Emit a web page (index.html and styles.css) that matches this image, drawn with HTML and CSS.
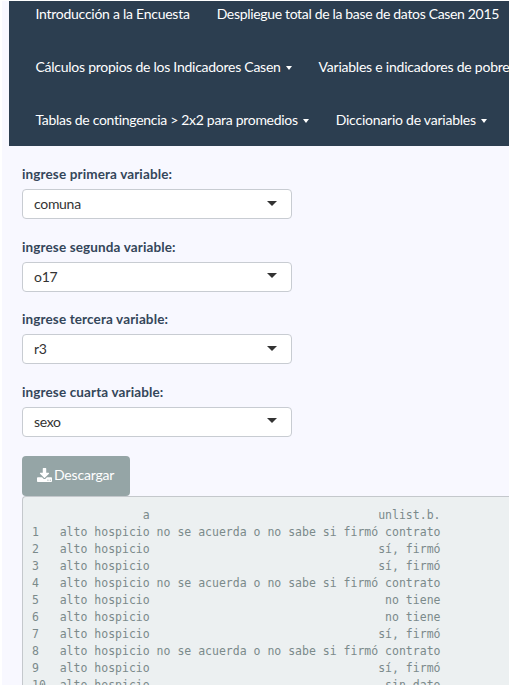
FILE: index.html
```html
<!DOCTYPE html>
<html lang="es">
<head>
<meta charset="utf-8">
<title>Casen 2015</title>
<link rel="stylesheet" href="styles.css">
</head>
<body>
<main class="page">
  <nav class="navbar">
    <div class="nav-row"><a class="loose">Introducción a la Encuesta</a><a class="tight">Despliegue total de la base de datos Casen 2015</a></div>
    <div class="nav-row"><a class="loose">Cálculos propios de los Indicadores Casen<i class="caret"></i></a><a class="wide">Variables e indicadores de pobre</a></div>
    <div class="nav-row"><a>Tablas de contingencia &gt; 2x2 para promedios<i class="caret"></i></a><a class="wide">Diccionario de variables<i class="caret"></i></a></div>
  </nav>
  <section class="content">
    <div class="field"><label>ingrese primera variable:</label><div class="select"><span>comuna</span><i class="arrow"></i></div></div>
    <div class="field"><label>ingrese segunda variable:</label><div class="select"><span>o17</span><i class="arrow"></i></div></div>
    <div class="field"><label>ingrese tercera variable:</label><div class="select"><span>r3</span><i class="arrow"></i></div></div>
    <div class="field"><label>ingrese cuarta variable:</label><div class="select"><span>sexo</span><i class="arrow"></i></div></div>
    <a class="button"><svg class="icon" viewBox="0 0 1664 1536"><path fill="currentColor" d="M1280 1216q0-26-19-45t-45-19-45 19-19 45 19 45 45 19 45-19 19-45zm256 0q0-26-19-45t-45-19-45 19-19 45 19 45 45 19 45-19 19-45zm128-224v320q0 40-28 68t-68 28H96q-40 0-68-28t-28-68V992q0-40 28-68t68-28h465l135 136q58 56 136 56t136-56l136-136h464q40 0 68 28t28 68zm-325-569q17 41-14 70l-448 448q-18 19-45 19t-45-19L339 493q-31-29-14-70 17-39 59-39h256V-64q0-26 19-45t45-19h256q26 0 45 19t19 45v448h256q42 0 59 39z" transform="translate(0 128)"/></svg><span>Descargar</span></a>
    <pre class="output">                a                                 unlist.b.
1   alto hospicio no se acuerda o no sabe si firmó contrato
2   alto hospicio                                 sí, firmó
3   alto hospicio                                 sí, firmó
4   alto hospicio no se acuerda o no sabe si firmó contrato
5   alto hospicio                                  no tiene
6   alto hospicio                                  no tiene
7   alto hospicio                                 sí, firmó
8   alto hospicio no se acuerda o no sabe si firmó contrato
9   alto hospicio                                 sí, firmó
10  alto hospicio                                  sin dato</pre>
  </section>
</main>
</body>
</html>
```
FILE: styles.css
```css
* { box-sizing: border-box; }
html { background: #fff; }
body {
  margin: 0;
  height: 686px;
  padding: 1px 1px 1px 2px;
  overflow: hidden;
  background: #fff;
  font-family: Lato, "Liberation Sans", sans-serif;
  font-size: 14px;
  color: #2c3e50;
}
.page {
  height: 684px;
  padding-left: 7px;
  overflow: hidden;
  background: #f8f8ff;
}
.navbar {
  height: 145px;
  overflow: hidden;
  background: #2c3e50;
  color: #fff;
}
.nav-row {
  display: flex;
  gap: 27px;
  height: 53px;
  padding: 4px 0 0 26.5px;
  line-height: 18px;
  letter-spacing: -0.3px;
  white-space: nowrap;
}
.loose { letter-spacing: -0.26px; }
.tight { letter-spacing: -0.33px; }
.wide { letter-spacing: -0.23px; }
.caret, .arrow {
  display: inline-block;
  border: 4px solid transparent;
  border-top-color: currentColor;
  border-bottom: 0;
}
.caret { margin-left: 5px; vertical-align: 2px; border-width: 4px 3.5px 0; }
.content { padding: 19px 0 0 13px; }
.field { height: 72.5px; }
.field label {
  display: block;
  height: 24px;
  line-height: 19px;
  font-size: 13.5px;
  font-weight: 700;
  letter-spacing: 0.13px;
  color: #34465a;
}
.select {
  display: flex;
  align-items: center;
  justify-content: space-between;
  width: 270px;
  height: 30px;
  padding: 0 14px 1px 11px;
  border: 1px solid #c8ccd2;
  border-radius: 4px;
  background: #fff;
  color: #333;
  font-size: 14px;
  letter-spacing: -0.3px;
}
.arrow { margin-top: -1px; border-width: 5px; border-bottom: 0; }
.button {
  display: flex;
  align-items: center;
  gap: 2px;
  width: 108px;
  height: 40px;
  margin-top: 1px;
  padding: 0 0 3px 15px;
  border-radius: 4px;
  background: #95a5a6;
  color: #fff;
  letter-spacing: -0.2px;
}
.icon { width: 15px; height: 14px; }
.output {
  height: 200px;
  margin: 0;
  padding: 10px 9px;
  border: 1px solid #c4c8cc;
  border-right: 0;
  border-radius: 4px 0 0 0;
  background: #ecf0f1;
  color: #7b8a8b;
  font: 11.5px/17px "DejaVu Sans Mono", monospace;
}
```
